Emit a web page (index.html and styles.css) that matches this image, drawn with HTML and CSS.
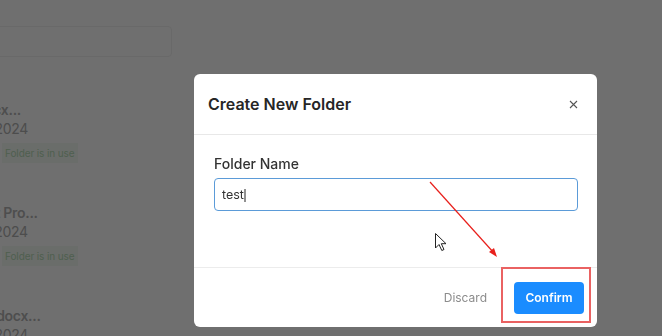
FILE: index.html
```html
<!DOCTYPE html>
<html lang="en">
<head>
    <meta charset="UTF-8" />
    <meta name="viewport" content="width=device-width, initial-scale=1.0"/>
    <title>Files | Create New Folder</title>
    <link rel="stylesheet" href="styles.css">
</head>
<body>
<div class="page">
    <div class="search"></div>

    <div class="file-list">
        <div class="file">
            <div class="file-name">Notes.docx...</div>
            <div class="file-date">Mar 12, 2024</div>
            <span class="badge">Folder is in use</span>
        </div>
        <div class="file">
            <div class="file-name">Q1 Budget Pro...</div>
            <div class="file-date">Mar 18, 2024</div>
            <span class="badge">Folder is in use</span>
        </div>
        <div class="file">
            <div class="file-name">Minutes1.docx...</div>
            <div class="file-date">Mar 21, 2024</div>
        </div>
    </div>
</div>

<div class="overlay">
    <div class="modal">
        <div class="modal-header">
            <h2>Create New Folder</h2>
            <button class="close" aria-label="Close">
                <svg width="9" height="9" viewBox="0 0 9 9">
                    <path d="M1 1L8 8M8 1L1 8" stroke="#555" stroke-width="1.1" fill="none"/>
                </svg>
            </button>
        </div>
        <div class="modal-body">
            <label for="folderName">Folder Name</label>
            <input id="folderName" type="text" value="test">
        </div>
        <div class="modal-footer">
            <button class="btn-discard">Discard</button>
            <button class="btn-confirm">Confirm</button>
        </div>
    </div>
</div>

<!-- annotation drawn over the screenshot -->
<svg class="annotation" width="662" height="336" viewBox="0 0 662 336">
    <line x1="245" y1="189" x2="245" y2="202" stroke="#222" stroke-width="1"/>
    <line x1="430" y1="182" x2="494" y2="253" stroke="#e8201c" stroke-width="1.2"/>
    <path d="M497 257L489 252L494 248Z" fill="#e8201c"/>
    <rect x="502" y="268" width="88" height="54" fill="none" stroke="#ea6262" stroke-width="2"/>
    <path d="M435.5 233.5V248L439 244.5L441.8 250.5L444 249.5L441.3 243.7H446Z" fill="#fff" stroke="#222" stroke-width="1"/>
</svg>
</body>
</html>
```

FILE: styles.css
```css
* {
    margin: 0;
    padding: 0;
    box-sizing: border-box;
    font-family: Inter, "Noto Sans", sans-serif;
}

body {
    background-color: #ffffff;
    color: #222;
    overflow: hidden;
}

.page {
    width: 662px;
    height: 336px;
    padding-top: 26px;
    overflow: hidden;
}

.search {
    width: 190px;
    height: 31px;
    margin-left: -18px;
    border: 1px solid #f0f0f0;
    border-radius: 4px;
}

.file-list {
    margin-left: -66px;
    margin-top: 43px;
}

.file {
    height: 103px;
    display: flex;
    flex-direction: column;
    align-items: flex-start;
}

.file-name {
    font-size: 14px;
    font-weight: 600;
    color: #b4b4b4;
    line-height: 20px;
    letter-spacing: -0.3px;
    white-space: nowrap;
}

.file-date {
    font-size: 14px;
    color: #b0b0b0;
    line-height: 18px;
    margin-left: 11px;
    letter-spacing: -0.3px;
    white-space: nowrap;
}

.badge {
    display: block;
    margin-left: 68px;
    margin-top: 5px;
    padding: 0 3px;
    height: 20px;
    line-height: 20px;
    font-size: 10px;
    letter-spacing: -0.1px;
    color: #b6dab6;
    background-color: #f3faf3;
    white-space: nowrap;
}

.overlay {
    position: fixed;
    inset: 0;
    background-color: rgba(0, 0, 0, 0.565);
    padding: 74px 0 0 194px;
}

.modal {
    width: 403px;
    height: 253px;
    background-color: #fff;
    border-radius: 6px;
    display: flex;
    flex-direction: column;
}

.modal-header {
    height: 61px;
    border-bottom: 1px solid #e8e8e8;
    display: flex;
    align-items: center;
    justify-content: space-between;
    padding: 0 19px 0 14px;
}

.modal-header h2 {
    font-size: 16px;
    font-weight: 600;
    color: #262626;
}

.close {
    border: none;
    background: none;
    width: 9px;
    height: 9px;
    display: flex;
}

.modal-body {
    height: 132px;
    padding: 19px 19px 0 20px;
    display: flex;
    flex-direction: column;
}

.modal-body label {
    font-size: 14px;
    font-weight: 500;
    color: #333;
    line-height: 20px;
    margin-bottom: 4px;
}

.modal-body input {
    height: 33px;
    border: 1px solid #5b9bd8;
    border-radius: 4px;
    padding: 0 7px;
    font-size: 12.5px;
    color: #333;
    outline: none;
}

.modal-footer {
    flex: 1;
    border-top: 1px solid #ececec;
    display: flex;
    align-items: center;
    justify-content: flex-end;
    gap: 13px;
    padding: 0 13px 0 0;
}

.modal-footer button {
    border: none;
    font-size: 12px;
    cursor: pointer;
}

.btn-discard {
    background: none;
    color: #8c8c8c;
    padding: 0 14px;
}

.btn-confirm {
    width: 70px;
    height: 32px;
    border-radius: 4px;
    background-color: #1a8cff;
    color: #fff;
    font-weight: 600;
}

.annotation {
    position: fixed;
    top: 0;
    left: 0;
}
```
